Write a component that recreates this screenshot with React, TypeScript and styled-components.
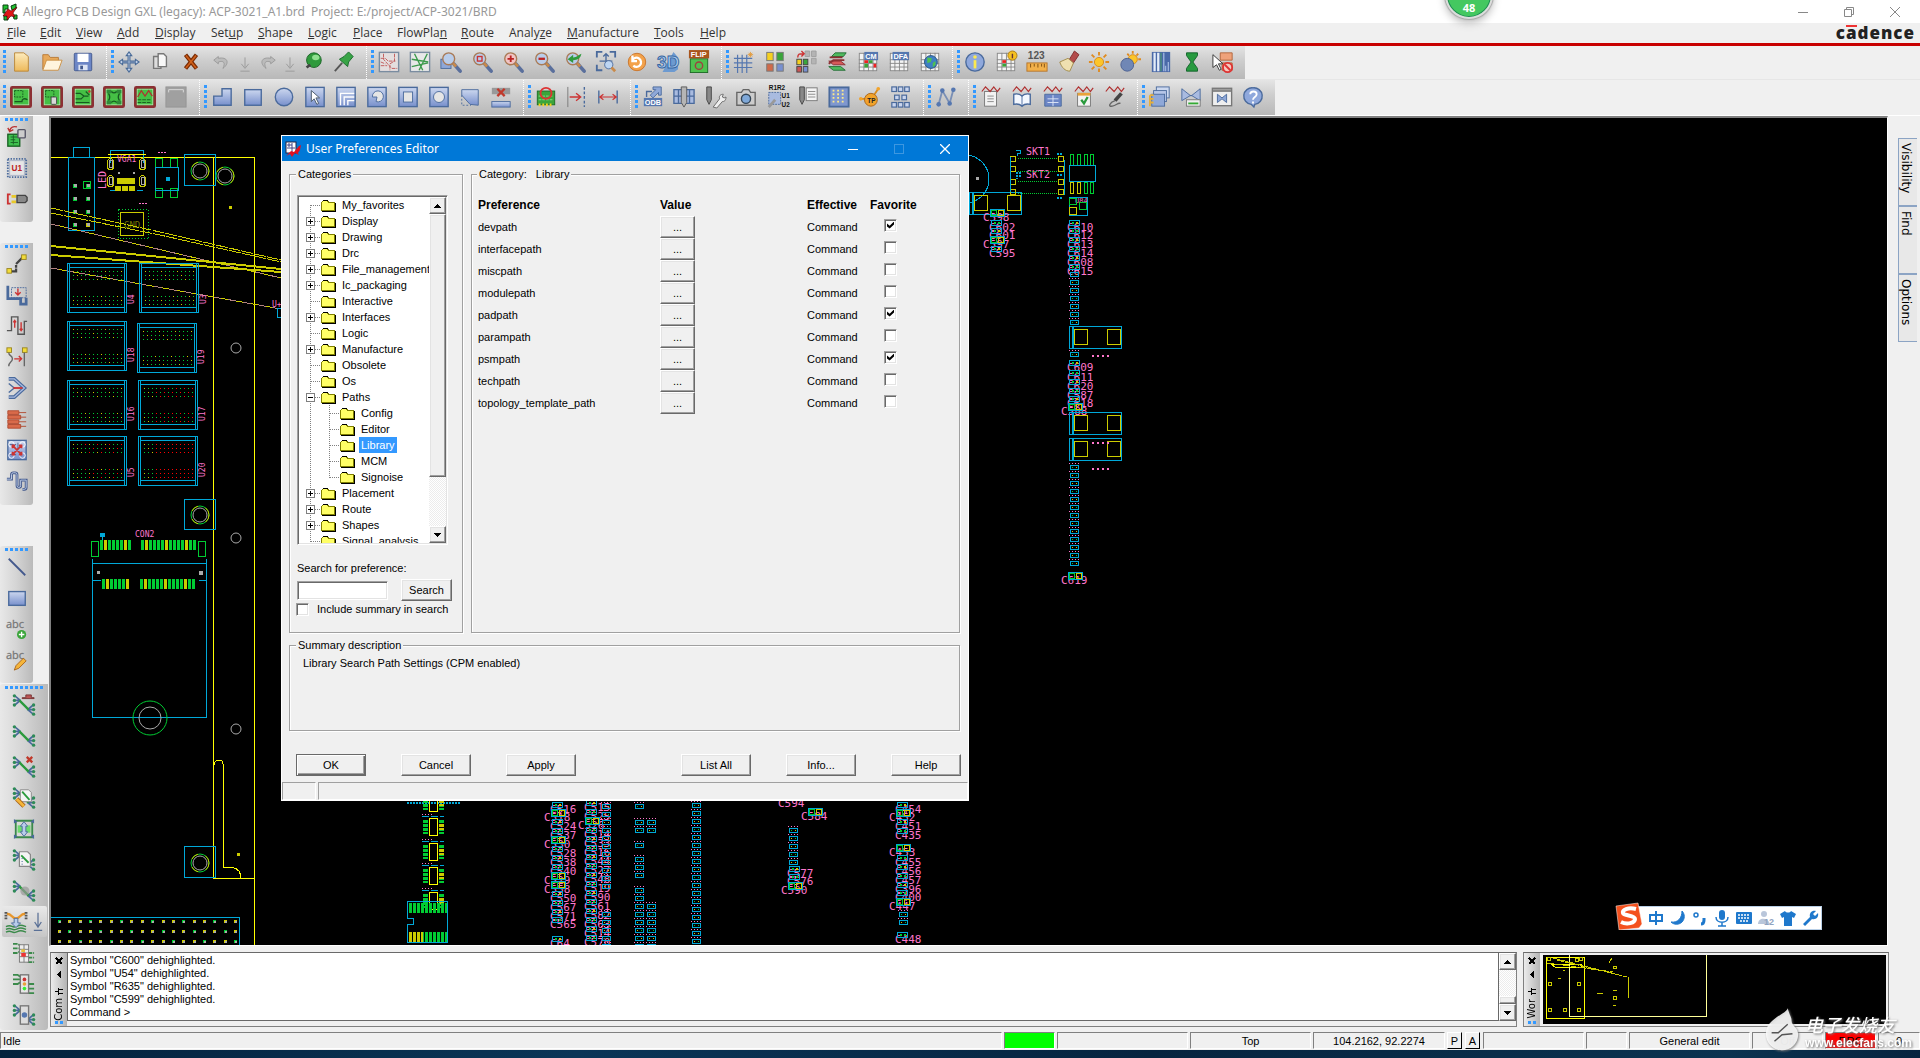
import React, { Fragment, ReactNode } from "react";
import styled, { createGlobalStyle, css } from "styled-components";

const SANS = `"Liberation Sans", Arial, sans-serif`;
const UI = `"Open Sans", "Noto Sans", sans-serif`;
const CAPTION = `"Noto Sans", "Open Sans", sans-serif`;
const FACE = "#f0f0f0";
const CYAN = "#00a8d8";
const GREEN = "#00cc33";
const OLIVE = "#cccc00";
const PINK = "#ff77cc";
const GREY = "#aaaaaa";

const GlobalStyle = createGlobalStyle`
  * { box-sizing: border-box; }
  body { margin: 0; background: ${FACE}; font: 11px/13px ${SANS}; color: #000; }
  button, input { font: inherit; color: inherit; }
`;

/* ---------- shared pieces ---------- */

const raised = css`
  background: ${FACE};
  border: 1px solid;
  border-color: #fff #696969 #696969 #fff;
  box-shadow: inset -1px -1px #a0a0a0, inset 1px 1px #e3e3e3;
`;

const sunken = css`
  border: 1px solid;
  border-color: #a0a0a0 #fff #fff #a0a0a0;
  box-shadow: inset 1px 1px #696969, inset -1px -1px #e3e3e3;
`;

const Page = styled.div`
  display: flex;
  flex-direction: column;
  height: 100vh;
  min-height: 860px;
  position: relative;
  overflow: hidden;
`;

const Defs = styled.svg`
  position: absolute;
  width: 0;
  height: 0;
`;

/* ---------- window chrome ---------- */

const TitleBar = styled.header`
  display: flex;
  align-items: center;
  height: 23px;
  padding: 0 2px;
  background: #fff;
  color: #999;
  font: 12px/20px ${CAPTION};
  white-space: pre;
`;

const WindowTitle = styled.h1`
  flex: 1;
  margin: 0;
  padding-left: 5px;
  font: inherit;
`;

const WindowButton = styled.button`
  display: flex;
  align-items: center;
  justify-content: center;
  width: 46px;
  height: 20px;
  padding: 0;
  border: 0;
  background: none;
`;

const MenuBar = styled.nav`
  display: flex;
  align-items: center;
  height: 23px;
  border-bottom: 3px solid #c80000;
  background: ${FACE};
`;

const MenuItem = styled.button<{ $w: number }>`
  width: ${(p) => p.$w}px;
  padding: 0 0 0 7px;
  border: 0;
  background: none;
  text-align: left;
  color: #333;
  font: 12px/18px ${UI};
  white-space: nowrap;
`;

const Brand = styled.div`
  margin-left: auto;
  padding-right: 5px;
  font: 800 17px/18px "Open Sans", sans-serif;
  letter-spacing: 1px;
  color: #222;
`;

const BrandBar = styled.span`
  border-top: 2px solid #e33;
  display: inline-block;
  line-height: 12px;
`;

const ToolRow = styled.div`
  display: flex;
  height: 34px;
  border-bottom: 1px solid #e6e6e6;
  & + & { height: 36px; border-bottom: 1px solid #fff; }
`;

const ToolGroup = styled.div`
  display: flex;
  align-items: center;
  padding: 0 7px 2px 4px;
  border-left: 1px dotted #fff;
  background: linear-gradient(#e4e4e4, #cfcfcf 40%, #b8b8b8);
  &:first-child { padding-left: 3px; padding-right: 8px; border-left: 0; }
`;

const Grip = styled.i`
  width: 3px;
  height: 24px;
  margin-right: -1px;
  background: repeating-linear-gradient(#3399ff 0 3px, transparent 3px 5px);
`;

const ToolButton = styled.button<{ $w?: number }>`
  display: flex;
  align-items: center;
  justify-content: center;
  width: ${(p) => p.$w ?? 31}px;
  height: 31px;
  padding: 0;
  border: 0;
  background: none;
  svg { display: block; flex: none; overflow: visible; }
`;

const Body = styled.div`
  flex: 1;
  min-height: 0;
  display: grid;
  grid-template-columns: 49px minmax(0, 1fr) 31px;
`;

const SideBars = styled.aside`
  display: flex;
  flex-direction: column;
  align-items: flex-start;
`;

const SideGroup = styled.div<{ $w: number; $gap: number; $pad: number }>`
  display: flex;
  flex-direction: column;
  align-items: center;
  width: ${(p) => p.$w}px;
  margin-bottom: ${(p) => p.$gap}px;
  padding: 2px 0 ${(p) => p.$pad}px;
  border-radius: 3px 0 3px 3px;
  background: linear-gradient(90deg, #e8e8e8, #d4d4d4 50%, #bababa);
`;

const SideGrip = styled.i<{ $w: number }>`
  width: ${(p) => p.$w}px;
  height: 3px;
  background: repeating-linear-gradient(90deg, #3399ff 0 3px, transparent 3px 5px);
`;

const ActiveTool = styled.div`
  display: flex;
  width: 45px;
  border-radius: 2px;
  background: linear-gradient(#e9e9e9, #c6c6c6);
`;

const Centre = styled.main`
  display: flex;
  flex-direction: column;
  min-height: 0;
`;

const Workspace = styled.section`
  position: relative;
  flex: 1;
  min-height: 0;
  display: flex;
  border: 1px solid;
  border-width: 2px 1px 1px 2px;
  border-color: #808080 #fff #fff #808080;
  margin-right: 1px;
`;

const Board = styled.svg`
  flex: 1;
  min-width: 0;
  background: #000;
`;

const TabRail = styled.aside`
  display: flex;
  flex-direction: column;
  padding: 22px 3px 0 9px;
`;

const RailTab = styled.button`
  width: 19px;
  height: 68px;
  padding: 4px 4px 0 0;
  border: 1px solid #8ca4c4;
  border-right: 0;
  background: #e8e8e8;
  writing-mode: vertical-rl;
  text-align: left;
  font: 12px/14px "DejaVu Sans", sans-serif;
`;

/* ---------- docks ---------- */

const Docks = styled.div`
  display: flex;
  gap: 6px;
  padding: 6px 0 5px 1px;
`;

const Dock = styled.section<{ $w?: number }>`
  display: flex;
  height: 75px;
  ${(p) => (p.$w ? `width: ${p.$w}px; flex: none;` : "flex: 1; min-width: 0;")}
  border: 1px solid;
  border-color: #696969 #808080 #808080 #808080;
`;

const DockBar = styled.div`
  display: flex;
  flex-direction: column;
  align-items: center;
  width: 16px;
  padding: 4px 0 2px;
  background: linear-gradient(90deg, #ececec, #b4b4b4);
`;

const DockName = styled.span`
  writing-mode: vertical-rl;
  transform: rotate(180deg);
  margin: -2px 0 auto;
  font: 10px/12px "DejaVu Sans", sans-serif;
`;

const DockGrip = styled.i`
  width: 8px;
  height: 3px;
  background: repeating-linear-gradient(90deg, #3399ff 0 3px, transparent 3px 5px);
`;

const Log = styled.div`
  flex: 1;
  height: 68px;
  padding: 1px 2px;
  background: #fff;
  border: 1px solid #696969;
  border-width: 0 1px 1px 1px;
`;

const LogLine = styled.p`
  margin: 0;
  font: 11px/13px ${SANS};
`;

const WorldView = styled.svg`
  flex: 1;
  margin: 2px 2px 2px 3px;
  background: #000;
`;

const ScrollTrack = styled.div<{ $w: number }>`
  display: flex;
  flex-direction: column;
  width: ${(p) => p.$w}px;
  background: repeating-conic-gradient(#fff 0 25%, #ececec 0 50%) 0 0 / 2px 2px;
`;

const LogScroll = styled(ScrollTrack)`
  height: 68px;
`;

const ScrollButton = styled.button`
  ${raised}
  display: flex;
  align-items: center;
  justify-content: center;
  width: 100%;
  height: 17px;
  padding: 0;
`;

const ScrollThumb = styled.div<{ $h: number }>`
  ${raised}
  height: ${(p) => p.$h}px;
`;

const Spacer = styled.div`
  flex: 1;
`;

/* ---------- status bar ---------- */

const StatusBar = styled.footer`
  display: flex;
  gap: 2px;
  height: 18px;
  padding-bottom: 1px;
  background: ${FACE};
`;

const StatusCell = styled.div<{ $w?: number; $bg?: string }>`
  ${(p) => (p.$w ? `width: ${p.$w}px;` : "flex: 1;")}
  padding-left: ${(p) => (p.$w ? 0 : 2)}px;
  text-align: ${(p) => (p.$w ? "center" : "left")};
  border: 1px solid;
  border-color: #808080 #fff #fff #808080;
  background: ${(p) => p.$bg ?? FACE};
  line-height: 16px;
`;

const StatusButton = styled.button`
  width: 15px;
  height: 17px;
  padding: 0;
  margin: 0 1px 0 0;
  border: 1px solid #000;
  border-color: #fff #000 #000 #fff;
  background: ${FACE};
  line-height: 14px;
`;

const TaskStrip = styled.div`
  display: flex;
  height: 8px;
  background: linear-gradient(90deg, #04223c, #0a3557 30%, #06243f 60%, #0b3350 90%, #06243f);
`;

/* ---------- dialog ---------- */

const Dialog = styled.section`
  position: absolute;
  left: 230px;
  top: 17px;
  width: 688px;
  border: 1px solid #fff;
  background: ${FACE};
`;

const DialogTitle = styled.header`
  display: flex;
  align-items: center;
  height: 25px;
  padding-left: 3px;
  background: #0078d7;
  color: #fff;
  font: 12px/20px ${CAPTION};
`;

const DialogHeading = styled.h2`
  flex: 1;
  margin: 0;
  padding-left: 5px;
  font: inherit;
`;

const DialogBody = styled.div`
  padding: 7px 8px 0 7px;
`;

const Columns = styled.div`
  display: flex;
  gap: 8px;
`;

const Group = styled.fieldset<{ $w?: number }>`
  ${(p) => (p.$w ? `width: ${p.$w}px; flex: none;` : "flex: 1;")}
  min-width: 0;
  margin: 0;
  padding: 14px 7px 16px;
  border: 1px solid #a0a0a0;
  box-shadow: 1px 1px #fff, inset 1px 1px #fff;
`;

const PrefGroup = styled(Group)`
  padding: 13px 6px 16px;
`;

const Legend = styled.legend`
  margin-left: -1px;
  padding: 0 2px;
  background: ${FACE};
  white-space: pre;
`;

const TreeBox = styled.div`
  ${sunken}
  display: flex;
  width: 151px;
  height: 350px;
  padding: 1px;
  background: #fff;
`;

const TreeList = styled.ul`
  flex: 1;
  min-width: 0;
  margin: 0;
  padding: 0;
  overflow: hidden;
  list-style: none;
`;

const TreeRow = styled.li`
  display: flex;
  align-items: center;
  height: 16px;
  white-space: nowrap;
  svg { flex: none; display: block; }
`;

const TreeName = styled.span<{ $on?: boolean }>`
  margin-left: 4px;
  padding: 0 2px;
  line-height: 16px;
  background: ${(p) => (p.$on ? "#3399ff" : "transparent")};
  color: ${(p) => (p.$on ? "#fff" : "#000")};
`;

const SearchLabel = styled.label`
  display: block;
  margin: 17px 0 4px;
`;

const SearchLine = styled.div`
  display: flex;
  align-items: center;
  justify-content: space-between;
  width: 155px;
`;

const SearchBox = styled.input`
  ${sunken}
  width: 91px;
  height: 19px;
  padding: 2px;
  background: #fff;
  outline: 0;
`;

const CheckLine = styled.label`
  display: flex;
  align-items: center;
  gap: 8px;
  margin: 2px 0 0 -1px;
  white-space: nowrap;
`;

const Check = styled.input`
  ${sunken}
  appearance: none;
  display: block;
  width: 13px;
  height: 13px;
  margin: 0;
  background: #fff;
  &:checked::before {
    content: "";
    display: block;
    width: 7px;
    height: 7px;
    margin: 2px;
    background: #000;
    clip-path: polygon(0 28%, 38% 62%, 100% 0, 100% 43%, 38% 100%, 0 72%);
  }
`;

const PushButton = styled.button<{ $w: number; $default?: boolean }>`
  ${raised}
  width: ${(p) => p.$w}px;
  height: 22px;
  padding: 0;
  ${(p) =>
    p.$default &&
    `border-color: #696969; box-shadow: inset 1px 1px #fff, inset -1px -1px #696969, inset -2px -2px #a0a0a0;`}
`;

const PrefTable = styled.table`
  width: 100%;
  border-collapse: collapse;
  table-layout: fixed;
  th, td { height: 22px; padding: 0; text-align: left; font-weight: 400; }
  thead th { font-weight: 700; font-size: 12px; }
  td:last-child { padding: 0 0 4px 14px; }
`;

const Summary = styled(Group)`
  height: 92px;
  margin-top: 6px;
  padding-top: 5px;
  padding-left: 13px;
  legend { margin-left: -7px; }
`;

const SummaryText = styled.p`
  margin: 0;
`;

const Actions = styled.div`
  display: flex;
  gap: 35px;
  padding: 23px 0 6px 7px;
  margin-right: -1px;
`;

const PushGap = styled.div`
  flex: 1;
`;

const DialogStatus = styled.div`
  display: flex;
  gap: 2px;
  height: 18px;
`;

const DialogStatusCell = styled.div<{ $w?: number }>`
  ${(p) => (p.$w ? `width: ${p.$w}px;` : "flex: 1;")}
  border: 1px solid;
  border-color: #a0a0a0 #fff #fff #a0a0a0;
`;

/* ---------- floating overlays ---------- */

const ImeBar = styled.div`
  position: absolute;
  right: 65px;
  bottom: 15px;
  display: flex;
  align-items: center;
  height: 24px;
  width: 203px;
  padding-left: 25px;
  border: 1px solid #b9cfe6;
  background: #fff;
`;

const ImeKey = styled.button`
  display: flex;
  align-items: center;
  justify-content: center;
  width: 22px;
  height: 22px;
  padding: 0;
  border: 0;
  background: none;
  color: #1e78cc;
`;

const ImeLogo = styled.svg`
  position: absolute;
  left: -6px;
  top: -5px;
`;

const CountBadge = styled.div`
  position: absolute;
  left: 1445px;
  top: -29px;
  display: flex;
  align-items: flex-end;
  justify-content: center;
  width: 48px;
  height: 48px;
  padding-bottom: 2px;
  border: 2px solid #dcdcdc;
  border-radius: 50%;
  background: #44c860;
  box-shadow: inset 0 0 0 1px #1f8a55, 0 0 1px 1px #a8a8a8, 0 4px 8px #bbb;
  color: #fff;
  font: 700 11px/14px "Open Sans", sans-serif;
`;

const Watermark = styled.div`
  position: absolute;
  right: 8px;
  bottom: 6px;
  display: flex;
  align-items: flex-end;
  gap: 4px;
  color: #fff;
  filter: drop-shadow(1px 1px 1px #777);
`;

const WatermarkText = styled.div`
  display: flex;
  flex-direction: column;
  font: italic 500 18px/20px "Noto Sans CJK SC", sans-serif;
`;

const WatermarkUrl = styled.span`
  font: 700 12px/18px "Liberation Sans", sans-serif;
`;

/* ---------- icons ---------- */

const ST = "#4a6a9c";
const Ico = ({ children, s = 24 }: { children: ReactNode; s?: number }) => (
  <svg width={s} height={s} viewBox="0 0 24 24" fill="none" aria-hidden="true">
    {children}
  </svg>
);

const Lens = ({ children, c = "#b9cdea" }: { children?: ReactNode; c?: string }) => (
  <>
    <path d="M15 14l7 8" stroke="#5a6f9c" strokeWidth="4" strokeLinecap="round" />
    <path d="M13.500 12.500l4 4.500" stroke="#c98a4a" strokeWidth="3" />
    <circle cx="9.500" cy="8.500" r="6.500" fill={c} stroke="#a97a55" strokeWidth="1.500" />
    {children}
  </>
);

const PcbTile = ({ children }: { children?: ReactNode }) => (
  <>
    <rect x="1.500" y="1.500" width="21" height="21" rx="1" fill="#45c045" stroke="#8c2f33" strokeWidth="3" />
    <rect x="3.500" y="3.500" width="17" height="17" stroke="#bfe8bf" strokeWidth=".7" />
    {children}
  </>
);

const BlueTile = ({ children }: { children?: ReactNode }) => (
  <>
    <rect x="2" y="1.500" width="20" height="21" fill="url(#gBlue)" stroke={ST} strokeWidth="1.500" />
    {children}
  </>
);

const Wave = () => <path d="M2 6l4-5 5 5 4-5 4 5 3-4" stroke="#b03030" strokeWidth="1.300" />;

const Sheet = ({ x = 5, y = 6, w = 13, h = 16 }) => (
  <rect x={x} y={y} width={w} height={h} fill="#f3f3f3" stroke="#777" />
);

const Grid = ({ c = "#888" }) => (
  <>
    <rect x="2.500" y="2.500" width="19" height="19" fill="#f4f4f4" stroke={c} />
    <path d="M2 9.500h20M2 13.500h20M2 17.500h20M7.500 2v20M12.500 2v20M17.500 2v20" stroke={c} />
  </>
);

const ratsEnds = (
  <>
    <path d="M2 2l6 5M2 7h6M2 12l6-5M22 12l-6 5M22 17h-6M22 22l-6-5" stroke={ST} strokeWidth="1.800" />
    {[2, 7, 12].map((y) => (
      <circle key={y} cx="1.500" cy={y} r="1.800" fill="#2e8b57" />
    ))}
    {[12, 17, 22].map((y) => (
      <circle key={y} cx="22.500" cy={y} r="1.800" fill="#2e8b57" />
    ))}
  </>
);
const Rats = ({ children }: { children?: ReactNode }) => (
  <>
    {ratsEnds}
    <path d="M7 7l10 10" stroke="#2a9a3c" strokeWidth="2.500" />
    {children}
  </>
);

const redX = (x: number, y: number, s = 3) => (
  <path d={`M${x - s} ${y - s}l${2 * s} ${2 * s}M${x + s} ${y - s}l${-2 * s} ${2 * s}`} stroke="#c0392b" strokeWidth="2.500" />
);

const icons: Record<string, ReactNode> = {
  "New": <path d="M5 2h10l5 4v16H5z" fill="url(#gGold)" stroke="#b98536" />,
  "Open": <><path d="M2 20V4h6l2 3h9v4" fill="#e8a95a" stroke="#b97a36" /><path d="M6 10h17l-4 11H2z" fill="#fff4dd" stroke="#c98f45" /></>,
  "Save": <><rect x="2.500" y="2.500" width="19" height="19" rx="1" fill="#6c86c6" stroke="#42588c" /><rect x="6" y="3" width="12" height="9" fill="#fff" /><rect x="7" y="15" width="10" height="6" fill="#dde4f3" /><rect x="9" y="16" width="3" height="4" fill="#42588c" /></>,
  "Move": <path d="M12 1l3 4h-2v6h6V9l4 3-4 3v-2h-6v6h2l-3 4-3-4h2v-6H5v2l-4-3 4-3v2h6V5H9z" fill="#c5d3ea" stroke="#486a97" strokeWidth="1.200" />,
  "Copy": <><path d="M5 6h8v13H5z" fill="#ddd" stroke="#777" strokeWidth="1.500" /><path d="M10 3h6l3 3v11h-9z" fill="#f7f7f7" stroke="#777" strokeWidth="1.500" /></>,
  "Delete": <><path d="M6 4l12 15M18 4L6 19" stroke="#7a2c05" strokeWidth="4.500" /><path d="M6.500 5l11 13.500M17.500 5l-11 13.500" stroke="#d0601a" strokeWidth="1.800" /></>,
  "Undo": <path d="M8 6l-5 4 5 4v-2c6-2 8 1 5 7 8-6 5-13-5-11z" fill="#bbb" stroke="#999" />,
  "Undo list": <path d="M8 7v11M4 14l4 5 4-5M3 22h10" stroke="#999" />,
  "Redo": <path d="M16 6l5 4-5 4v-2c-6-2-8 1-5 7-8-6-5-13 5-11z" fill="#bbb" stroke="#999" />,
  "Fix": <><ellipse cx="13" cy="10" rx="8" ry="8" fill="#2f9a3c" stroke="#196325" /><ellipse cx="15" cy="7" rx="4" ry="3" fill="#8fe08f" /><path d="M5 18l4-3" stroke="#444" strokeWidth="3" /></>,
  "Unfix": <><path d="M2 22l8-9" stroke="#555" strokeWidth="2" /><path d="M7 9l9 8 1-5 5-6-5-5-5 5z" fill="#38a446" stroke="#17672a" /></>,
  "Unrats": <><rect x="1.500" y="1.500" width="21" height="21" fill="#e4dede" stroke="#7a8ca0" strokeWidth="1.500" /><path d="M3 8h5l3 3h8M6 3v6l8 9M18 3v8l-5 3v7M3 16h7M15 19h6M3 12l5 2" stroke="#c05858" strokeDasharray="4 1" /></>,
  "Rats": <><rect x="1.500" y="1.500" width="21" height="21" fill="#e8e8e8" stroke="#7a8ca0" strokeWidth="1.500" /><path d="M3 9l18 3M6 3l9 18M20 3l-9 18M3 17l18-4" stroke="#3c9a4c" strokeWidth="1.500" /></>,
  "Zoom points": <><rect x="1" y="9" width="11" height="10" fill="#8fa8d8" stroke={ST} /><Lens /></>,
  "Zoom window": <Lens><rect x="7" y="6" width="5" height="5" stroke="#c33" strokeWidth="1.500" /></Lens>,
  "Zoom in": <Lens c="#f1c4c4"><path d="M6 8.500h7M9.500 5v7" stroke="#b22" strokeWidth="2" /></Lens>,
  "Zoom out": <Lens><path d="M6 8.500h7" stroke="#b22" strokeWidth="2.500" /></Lens>,
  "Zoom previous": <Lens><path d="M4 9l6-5v3c4 0 6-3 9-4-1 5-4 7-9 7v3z" fill="#2f9a3c" /></Lens>,
  "Zoom fit": <><path d="M2 7V1h6M16 1h6v6M2 15v6h6" stroke={ST} strokeWidth="2" /><path d="M12 4v14M5 11h14M9 6l3-3 3 3" stroke={ST} strokeWidth="1.500" /><circle cx="15" cy="15" r="4.500" fill="#bdd5f2" stroke={ST} /><path d="M18 18l4 4" stroke="#c98a4a" strokeWidth="3" /></>,
  "Refresh": <><circle cx="12" cy="12" r="9.500" fill="#f3a24a" stroke="#c8732a" /><path d="M7 10a5 5 0 1 1 1 6M7 5v6h5" stroke="#fff" strokeWidth="2.500" /></>,
  "3D view": <><path d="M18 1l5 6v13l-4 3H6z" fill="#6d9ad0" /><text x="0" y="19" fontFamily="Liberation Sans" fontWeight="700" fontSize="19" fill="#a9c9ee" stroke="#33649f" strokeWidth="1">3D</text></>,
  "Flip": <><rect x="2.500" y="8.500" width="19" height="15" fill="#4fc24f" stroke="#1d6a26" /><circle cx="12" cy="16" r="4" stroke="#a04040" strokeWidth="1.500" /><rect x="1" y="-1" width="22" height="9" fill="#a8541c" /><text x="3" y="6.500" fontFamily="Liberation Sans" fontWeight="700" fontSize="8" fill="#fff">FLIP</text></>,
  "Grid": <><path d="M1 8h20M1 13h20M1 18h20M5 4v20M10 4v20M15 4v20" stroke="#5577b0" strokeWidth="1.300" /><path d="M19 1v6M16 4h6M17 2l4 4M21 2l-4 4" stroke="#e39a3a" /></>,
  "Quick place": <><rect x="3" y="1.500" width="7" height="9" fill="#f5d020" stroke="#777" /><rect x="14" y="1.500" width="7" height="9" fill="#3aa53a" stroke="#777" /><rect x="3" y="14" width="7" height="8" fill="#d06a4a" stroke="#777" /><rect x="14" y="14" width="7" height="8" fill="#7890d0" stroke="#777" /></>,
  "Swap": <><path d="M11 0h5v6h-5zM18 0h5v6h-5zM18 8h5v6h-5z" fill="#b4b4b4" stroke="#a0a0a0" /><rect x="2" y="9" width="5" height="6" fill="#f5d020" stroke="#444" /><rect x="9" y="9" width="5" height="6" fill="#3aa53a" stroke="#444" /><rect x="2" y="17" width="5" height="6" fill="#c55" stroke="#444" /><rect x="9" y="17" width="5" height="6" fill="#7890d0" stroke="#444" /><path d="M3 7c0-4 2-4 6-4M7 0l3 3-3 3" stroke="#c33" strokeWidth="1.500" /></>,
  "Cross section": <><path d="M3 17h13l5 4H8z" fill="#4fb95f" stroke="#246d34" /><path d="M3 11h13l5 4H8z" fill="#d65a5a" stroke="#8c2f33" /><path d="M6 6h13l3-4H10z" fill="#4fb95f" stroke="#246d34" /><path d="M3 14l5-4h12M4 7h14" stroke="#8c2f33" strokeWidth="2" /></>,
  "Constraint manager": <><Grid /><rect x="8" y="1" width="15" height="9" fill="#5577b0" /><text x="9" y="8.500" fontFamily="Liberation Sans" fontWeight="700" fontSize="8" fill="#fff">CM</text><path d="M8 14h4v4H8zM13 10h4v3h-4z" fill="#3aa53a" /><path d="M8 10h4v3H8zM18 14h3v4h-3z" fill="#e22" /></>,
  "DFA": <><Grid /><rect x="5" y="1" width="18" height="9" fill="#5577b0" /><text x="6" y="8.500" fontFamily="Liberation Sans" fontWeight="700" fontSize="8" fill="#fff">DFA</text></>,
  "Constraint web": <><Grid /><circle cx="13" cy="12" r="7" fill="#3f7fc4" stroke="#24507f" /><path d="M9 7l5 1-1 4-4 1zM15 13l3-2v4l-3 3z" fill="#4fc24f" /></>,
  "Info": <><circle cx="12" cy="12" r="10" fill="#8fa8dc" stroke={ST} strokeWidth="1.500" /><path d="M12 10v9" stroke="#fce94f" strokeWidth="3" /><circle cx="12" cy="6.500" r="2" fill="#fce94f" /></>,
  "Element report": <><Grid /><path d="M8 10h4v3H8z" fill="#e22" /><path d="M8 14h4v3H8z" fill="#3aa53a" /><circle cx="19" cy="5" r="5" fill="#f5c020" stroke="#a87a10" /><path d="M19 3v5" stroke="#633" strokeWidth="1.500" /></>,
  "Measure": <><text x="2" y="9" fontFamily="Liberation Sans" fontWeight="700" fontSize="11" fill="#555">123</text><rect x="1" y="13" width="22" height="9" fill="#f2b04a" stroke="#b5742a" /><path d="M5 14v4M9 14v3M13 14v4M17 14v3M20 14v4" stroke="#7a4a10" /></>,
  "Brush": <><path d="M13 10l6-10 5 4-6 9z" fill="#b34a4a" stroke="#7f2f2f" /><path d="M3 12l9-4 6 5-4 9c-5 0-9-4-11-10z" fill="#efe0b0" stroke="#a08a4a" /></>,
  "Highlight": <><circle cx="12" cy="12" r="5" fill="#fcc52a" stroke="#d98b1a" /><path d="M12 1v4M12 19v4M1 12h4M19 12h4M4 4l3 3M17 17l3 3M20 4l-3 3M7 17l-3 3" stroke="#e08a1f" strokeWidth="2" /></>,
  "Dehighlight": <><circle cx="15" cy="9" r="5" fill="#fcc52a" stroke="#d98b1a" /><path d="M15 0v3M24 9h-3M21 3l-2 2M9 3l2 2" stroke="#e08a1f" strokeWidth="2" /><circle cx="9" cy="15" r="7" fill="#7087b5" stroke="#4a5f8f" /></>,
  "Shadow": <><rect x="2" y="1" width="20" height="22" fill="#4a69a8" /><path d="M5 2v20M9 2v20" stroke="#e3ecf8" strokeWidth="2.500" /><path d="M12 2v20" stroke="#4a8f7a" strokeWidth="1.500" /><path d="M15 2v20M17 16v6M20 12v10" stroke="#9db4dc" strokeWidth="1.500" /></>,
  "Waive": <path d="M6 2h12v3l-5 7 5 7v3H6v-3l5-7-5-7z" fill="#279a3f" stroke="#11602a" />,
  "Idle select": <><path d="M9 2h13v8H9z" fill="#efa27a" stroke="#b0643a" /><path d="M11 13h11v8H11z" fill="#efa27a" stroke="#b0643a" /><path d="M1 4v14l4-3 3 6 2-1-3-6h5z" fill="#fff" stroke="#333" /><circle cx="17" cy="18" r="5" fill="#f6c7bd" stroke="#d33" strokeWidth="2" /><path d="M14 15l6 6" stroke="#d33" strokeWidth="2" /></>,

  "Edit mode general": <PcbTile><rect x="5" y="5" width="9" height="7" stroke="#175a20" strokeDasharray="2 1" /><path d="M5 17h8c0-3 3-4 6-2" stroke="#175a20" strokeWidth="1.500" /></PcbTile>,
  "Placement mode": <PcbTile><rect x="5" y="5" width="9" height="7" stroke="#175a20" strokeDasharray="2 1" /><rect x="11" y="12" width="6" height="8" rx="1" fill="#d8d8d8" stroke="#444" /></PcbTile>,
  "Etch mode": <PcbTile><path d="M4 8h5l4 3h5M4 14h6l3-3M4 18h15M15 6l4 4" stroke="#175a20" strokeWidth="1.300" /><circle cx="19" cy="6" r="1.300" fill="#c33" /></PcbTile>,
  "Flow mode": <PcbTile><path d="M6 8c2 3 2 5 0 8M18 8c-2 3-2 5 0 8M9 6c2 2 4 2 6 0M9 18c2-2 4-2 6 0" stroke="#175a20" strokeWidth="1.500" /><path d="M4 4h5v4H4zM15 4h5v4h-5zM4 16h5v4H4zM15 16h5v4h-5z" fill="#2f8b3a" /></PcbTile>,
  "SI mode": <PcbTile><path d="M4 12l4-7 4 6 4-6 4 6" stroke="#b03030" strokeWidth="1.300" /><path d="M4 15h15M4 18h15" stroke="#175a20" strokeDasharray="4 1" /></PcbTile>,
  "Symbol mode": <><rect x="1" y="1" width="22" height="22" fill="#a0a0a0" stroke="#959595" /><path d="M4 7V4h16v3" stroke="#ddd" /></>,

  "Shape polygon": <path d="M3 21V11h9V3h10v18z" fill="url(#gBlue)" stroke={ST} strokeWidth="1.500" />,
  "Shape rectangle": <rect x="3" y="4" width="18" height="17" fill="url(#gBlue)" stroke={ST} strokeWidth="1.500" />,
  "Shape circle": <circle cx="12" cy="12" r="9.500" fill="url(#gBlue)" stroke={ST} strokeWidth="1.500" />,
  "Shape select": <BlueTile><path d="M8 5v12l3-3 3 6 2-1-3-6h4z" fill="#fff" stroke="#456" /></BlueTile>,
  "Shape void element": <BlueTile><path d="M6 21V8h15M10 21v-9h11M14 21v-5h7" stroke="#fff" strokeWidth="1.500" /></BlueTile>,
  "Shape void polygon": <BlueTile><path d="M12 12h-5a6 6 0 1 1 4 5z" fill="#e5e5e5" stroke={ST} /></BlueTile>,
  "Shape void rectangle": <BlueTile><rect x="7" y="6.500" width="10" height="11" fill="#e5e5e5" stroke={ST} /></BlueTile>,
  "Shape void circle": <BlueTile><circle cx="12" cy="12" r="6" fill="#e5e5e5" stroke={ST} /></BlueTile>,
  "Shape edit boundary": <><path d="M3 4h18v17l-9-1-9-10z" fill="url(#gBlue)" stroke={ST} /><path d="M3 10v11h10" stroke={ST} strokeDasharray="2 2" /></>,
  "Delete islands": <><path d="M2 2h20v7H2z" fill="#999" />{redX(12, 7, 4)}<rect x="2" y="17" width="20" height="6" fill="url(#gBlue)" stroke={ST} /></>,
  "Artwork": <><rect x="2.500" y="5.500" width="19" height="15" fill="#3aa53a" stroke="#1d6a26" /><path d="M4 11h16M4 15h16" stroke="#8fdc8f" strokeDasharray="3 1" /><path d="M5 22v-3M9 22v-3M13 22v-3M17 22v-3" stroke="#f5d020" strokeWidth="2" /><circle cx="12" cy="8" r="6" stroke="#d33" strokeWidth="2" /></>,
  "Linear dimension": <><path d="M2 1v22" stroke="#777" /><path d="M20 1v22" stroke={ST} strokeDasharray="3 2" strokeWidth="1.500" /><path d="M4 12h11M11 8l5 4-5 4" stroke="#c33" strokeWidth="1.500" /></>,
  "Datum dimension": <><path d="M2 5v14M22 5v14" stroke={ST} strokeWidth="1.500" /><path d="M4 12h16M7 9l-4 3 4 3M17 9l4 3-4 3" stroke="#c33" strokeWidth="1.300" /></>,

  "ODB++ export": <><rect x="2" y="13" width="20" height="9" fill="#5577b0" /><text x="3" y="20.500" fontFamily="Liberation Sans" fontWeight="700" fontSize="8" fill="#fff">ODB</text><path d="M5 12V6h6" stroke={ST} strokeWidth="1.500" /><path d="M9 10l6-6h-3V1h9v9h-3V7l-6 6z" fill="#8fa8d8" stroke={ST} /></>,
  "Drill table": <><path d="M1 4h22v15H1zM1 11h22M6 4v15M18 4v15" stroke={ST} strokeWidth="1.500" fill="#a9bbe0" /><path d="M9 1h6v17l-3 5-3-5z" fill="#b5b5b5" stroke="#555" /></>,
  "NC parameters": <><path d="M3 1h5v14l-2.500 5L3 15z" fill="#888" stroke="#444" /><path d="M10 23l7-9c-1-3 1-5 4-5l-1 3 2 1 2-1c0 4-2 5-4 5l-6 7z" fill="#eee" stroke="#666" /></>,
  "Snapshot": <><path d="M2 7h5l2-3h6l2 3h5v14H2z" fill="#ccc" stroke="#666" strokeWidth="1.500" /><circle cx="12" cy="14" r="5" fill="#7fa8d8" stroke="#345" strokeWidth="1.500" /></>,
  "Rename refdes": <><text x="3" y="4" fontFamily="Liberation Sans" fontWeight="700" fontSize="7" fill="#111">R1R2</text><rect x="3" y="7" width="13" height="13" fill="#a9bbe0" stroke={ST} strokeDasharray="2 1" /><text x="17" y="13" fontFamily="Liberation Sans" fontWeight="700" fontSize="7" fill="#111">U1</text><text x="17" y="23" fontFamily="Liberation Sans" fontWeight="700" fontSize="7" fill="#111">U2</text><path d="M3 23l7-8" stroke="#999" strokeWidth="3" /></>,
  "Drill legend": <><path d="M3 1h5v14l-2.500 5L3 15z" fill="#888" stroke="#444" /><Sheet x={10} y={2} w={12} h={14} /><path d="M12 6h8M12 9h8M12 12h8" stroke="#888" /></>,
  "Silkscreen": <><rect x="1.500" y="1.500" width="21" height="21" fill="#7f97cf" stroke={ST} strokeWidth="2" /><path d="M5 5h14M5 9h14M5 13h14M5 17h14" stroke="#fce98a" strokeWidth="2" strokeDasharray="2 3" /></>,
  "Testprep": <><path d="M1 14h6M17 9l4-6" stroke="#d98b1a" strokeWidth="2" /><circle cx="2" cy="14" r="2" fill="#f2a32a" /><circle cx="21" cy="3" r="2" fill="#f2a32a" /><circle cx="13" cy="15" r="7" fill="#f2a32a" stroke="#a8641a" /><text x="9" y="18" fontFamily="Liberation Sans" fontWeight="700" fontSize="7" fill="#222">TP</text></>,
  "Auto assembly": <>{[[3, 1], [10, 1], [17, 1], [6, 10], [14, 10], [3, 18], [10, 18], [17, 18]].map(([x, y]) => <rect key={x + "-" + y} x={x - 1} y={y} width="5" height="5" fill="#c9d5ee" stroke={ST} strokeWidth="1.300" />)}</>,
  "Signal probe": <><path d="M4 20l4-15 8 14 4-15" stroke="#7a8fb5" strokeWidth="2" /><circle cx="4" cy="20" r="2.500" fill="#5577b0" /><circle cx="8" cy="5" r="2.500" fill="#5577b0" /><circle cx="16" cy="19" r="2.500" fill="#5577b0" /><circle cx="20" cy="4" r="2.500" fill="#5577b0" /></>,
  "Signal sheet": <><Sheet /><path d="M8 11h7M8 14h7M8 17h7" stroke="#888" /><Wave /></>,
  "Signal library": <><path d="M3 9c4-1 7 0 9 2 2-2 5-3 9-2v11c-4-1-7 0-9 2-2-2-5-3-9-2z" fill="#f4f8ff" stroke={ST} strokeWidth="1.500" /><path d="M12 11v11" stroke={ST} /><Wave /></>,
  "Signal model": <><path d="M3 9h18v13H3z" fill="#6c86c6" stroke={ST} /><path d="M6 14h12M6 18h12M12 10v12" stroke="#dfe7f7" /><Wave /></>,
  "Signal audit": <><Sheet x={5} y={8} w={14} h={14} /><path d="M5 9h14" stroke="#e8a23a" strokeWidth="3" /><path d="M9 15l3 4 4-7" stroke="#2a9a3c" strokeWidth="2.500" /><Wave /></>,
  "Signal probe pen": <><path d="M19 8l-7 8" stroke="#444" strokeWidth="4" /><path d="M12 16c-6 2-8 7-3 6s6-4 9-3" stroke="#666" strokeWidth="1.500" /><Wave /></>,
  "Cascade": <><rect x="8" y="1" width="14" height="12" fill="#cdd9f0" stroke={ST} /><rect x="5" y="5" width="14" height="12" fill="#b6c6e8" stroke={ST} /><rect x="3" y="9" width="14" height="13" fill="#8fa8d8" stroke={ST} /><path d="M1 10v12M1 10h4M1 14h4M1 18h4" stroke="#e8b03a" strokeWidth="2" /></>,
  "Mirror board": <><path d="M2 3l10 8 10-8v13l-10-6-10 6z" fill="#a9bbe0" stroke={ST} /><rect x="7" y="15" width="15" height="7" fill="#eee" stroke="#777" /><path d="M9 19h11" stroke="#3a3" strokeWidth="2" /></>,
  "Mirror window": <><rect x="1.500" y="2.500" width="21" height="19" fill="#eee" stroke="#777" strokeWidth="1.500" /><path d="M2 5h20" stroke="#888" strokeWidth="3" /><path d="M7 9l5 4 5-4v9l-5-4-5 4z" fill="#8fa8d8" stroke={ST} /></>,
  "Help": <><path d="M12 2a9 9 0 1 1 2 18l-1 3-3-3A9 9 0 0 1 12 2z" fill="#8fa8dc" stroke={ST} strokeWidth="1.500" /><path d="M9 9c0-4 7-4 7 0 0 3-4 3-4 6M12 17v2" stroke="#fff" strokeWidth="2" /></>,

  "Place manual": <><rect x="2" y="9" width="13" height="13" fill="#3fc04f" stroke="#196325" strokeWidth="1.500" /><path d="M5 12h8M5 15h5M5 18h8M8 10v10" stroke="#196325" /><rect x="13" y="4" width="8" height="9" rx="1" fill="#ccc" stroke="#556" strokeWidth="1.500" /><path d="M12 1C8 0 5 1 4 5M2 2l2 4 4-2" stroke="#b33" strokeWidth="1.500" /></>,
  "Place component": <><rect x="2" y="2" width="20" height="20" stroke={ST} strokeWidth="2" strokeDasharray="1.500 1.500" /><rect x="4" y="4" width="16" height="16" fill="#e6e6e6" stroke="#a9b4c8" /><text x="6" y="15.500" fontFamily="Liberation Sans" fontWeight="700" fontSize="9" fill="#b22">U1</text></>,
  "Swap pins": <><path d="M5 7H2v10h3" stroke="#c33" strokeWidth="2" /><path d="M6 9h5M6 15h5" stroke="#e8c82a" strokeWidth="3" /><path d="M12 8h9l2 2v4l-2 2h-9z" fill="#888" stroke="#444" strokeWidth="1.500" /></>,
  "Add connect": <><path d="M5 20h6v-8l7-7" stroke="#444" strokeWidth="2.500" strokeDasharray="9 1 3 1" /><rect x="1" y="17" width="5" height="5" fill="#f2dc3a" stroke="#988420" /><rect x="17" y="2" width="5" height="5" fill="#f2dc3a" stroke="#988420" /></>,
  "Slide": <><path d="M2 2v14h14v6h6v-7" stroke={ST} strokeWidth="3" /><path d="M6 4h16v11H6z" stroke={ST} strokeDasharray="2 1" /><path d="M13 5v6M10 9l3 3 3-3" stroke="#c33" strokeWidth="1.500" /></>,
  "Delay tune": <><path d="M1 17h5V2h7v19h7V7h3" stroke="#555" strokeWidth="1.500" /><path d="M9.500 14V6M8 8l1.500-2L11 8M16.500 8v9M15 15l1.500 2 1.500-2" stroke="#c33" strokeWidth="1.500" /></>,
  "Custom smooth": <><rect x="1" y="2" width="5" height="5" fill="#f2dc3a" stroke="#988420" /><rect x="18" y="2" width="5" height="5" fill="#f2dc3a" stroke="#988420" /><path d="M3 7c0 4 4 3 4 7s-4 3-4 8M20 7v15" stroke="#666" strokeWidth="1.500" /><path d="M9 14h8M14 11l3 3-3 3" stroke="#c33" strokeWidth="1.500" /></>,
  "Fanout": <><path d="M3 2h6l11 10L9 22H3" stroke={ST} strokeWidth="4" /><path d="M3 2h6l11 10L9 22H3" stroke="#a9bbe0" strokeWidth="1.500" /><path d="M3 7l6 5-6 5" stroke={ST} strokeWidth="1.500" /><path d="M8 12h10" stroke="#c33" strokeWidth="2" /></>,
  "Spread": <path d="M2 3h12v4H2zM2 8h14v4H2zM2 13h12v4H2zM2 18h14v4H2zM14 5h8M16 10h6M14 15h8M16 20h6" fill="#d96a4a" stroke="#b04a30" />,
  "Auto route": <BlueTile><path d="M4 6h7M13 4v7M4 17h7M16 14v7" stroke={ST} /><circle cx="6" cy="6" r="3" stroke="#fff" /><circle cx="18" cy="6" r="3" stroke="#fff" /><circle cx="6" cy="18" r="3" stroke="#fff" /><circle cx="18" cy="18" r="3" stroke="#fff" /><path d="M7 7l10 10M17 7L7 17M7 10V7h3M14 7h3v3M7 14v3h3M14 17h3v-3" stroke="#c33" strokeWidth="1.800" /></BlueTile>,
  "Snake": <><path d="M1 10h5V5q0-2 2-2h2q2 0 2 2v12q0 2 2 2t2-2v-6h6v8q0 2-2 2h-2" stroke="#42588c" strokeWidth="3" /><path d="M1 10h5V5q0-2 2-2h2q2 0 2 2v12q0 2 2 2t2-2v-6h6v8q0 2-2 2h-2" stroke="#c5d3ea" strokeWidth="1" /></>,
  "Add line": <path d="M3 3l18 18" stroke="#42588c" strokeWidth="2" />,
  "Add rectangle": <rect x="3" y="5" width="18" height="15" fill="url(#gBlue)" stroke={ST} strokeWidth="1.500" />,
  "Add text": <><text x="0" y="11" fontFamily="Open Sans" fontSize="12" fill="#777" stroke="#777" strokeWidth=".3">abc</text><circle cx="17" cy="18" r="5" fill="#3aa53a" /><path d="M14 18h6M17 15v6" stroke="#fff" strokeWidth="1.500" /></>,
  "Edit text": <><text x="0" y="11" fontFamily="Open Sans" fontSize="12" fill="#777" stroke="#777" strokeWidth=".3">abc</text><path d="M9 23l2-5 8-8 3 3-8 8z" fill="#f5b53a" stroke="#a8641a" /></>,

  "Flow hide": <Rats><path d="M10 5h13v-1h-3v-3h-6v3h-4z" fill="#b55" stroke="#733" /></Rats>,
  "Flow show": <Rats />,
  "Flow delete": <Rats>{redX(18, 4)}</Rats>,
  "Flow edit": <Rats><path d="M8 3h9l3 3v10H8z" fill="#f4f4f4" stroke="#888" /><path d="M10 5l8 9" stroke="#2a9a3c" strokeWidth="2" /><path d="M4 13l8 8" stroke="#a8641a" strokeWidth="5" /><path d="M4 13l8 8" stroke="#f5b53a" strokeWidth="3" /></Rats>,
  "Flow width": <><path d="M2 3h20M2 21h20M3 3v18M21 3v18" stroke="#3a8a4a" strokeWidth="2" /><path d="M1 6V1l4 3zM23 6V1l-4 3zM1 18v5l4-3zM23 18v5l-4-3z" fill={ST} /><rect x="5" y="8" width="14" height="8" fill="#6edc6e" /><path d="M12 4l4 5h-2v6h2l-4 5-4-5h2V9H8z" fill="#b9cdea" stroke={ST} /></>,
  "Flow sheet": <Rats><path d="M7 3h9l3 3v13H7z" fill="#f4f4f4" stroke="#888" strokeWidth="1.300" /><path d="M9 7l8 8" stroke="#2a9a3c" strokeWidth="2" /><path d="M10 10v7" stroke={ST} strokeDasharray="1 2" strokeWidth="1.500" /></Rats>,
  "Flow via": <Rats><circle cx="13" cy="12" r="5" fill="#999" fillOpacity=".7" /></Rats>,
  "Flow plan": <><path d="M2 3c6 0 5 5 10 5s4-5 10-5" stroke="#e8962a" strokeWidth="2.500" /><path d="M1 17c7-3 6 2 11 0s5-2 11 0M1 20c7-3 6 2 11 0s5-2 11 0M1 23c7-3 6 2 11 0s5-2 11 0" stroke="#3a8a4a" strokeWidth="1.500" /><path d="M10 8h4v5h3l-5 5-5-5h3z" fill="#b9cdea" stroke={ST} /><path d="M1 1v8M23 1v8" stroke="#555" strokeDasharray="2 1" strokeWidth="3" /></>,
  "Flow plan options": <path d="M8 1v16M4 12l4 6 4-6M3 22h10" stroke="#5a7096" strokeWidth="1.500" />,
  "Flow table": <><path d="M0 2h5l3 2M0 7h8M0 12h5l3-2M16 12h7M16 17h7M16 22h7" stroke="#3a8a4a" strokeWidth="2" strokeDasharray="5 1" /><rect x="7" y="3" width="10" height="19" fill="#eee" stroke="#777" /><path d="M7 8h10M7 12h10M7 16h10M12 3v19" stroke="#777" /><rect x="9" y="12" width="5" height="4" fill="#e33" /><rect x="9" y="8" width="4" height="3" fill="#e8c23a" /></>,
  "Flow lights": <><path d="M0 2h5l3 2M0 7h8M0 12h5l3-2M16 12h7M16 17h7M16 22h7" stroke="#3a8a4a" strokeWidth="2" /><rect x="8" y="2" width="9" height="20" fill="#e6e6e6" stroke="#777" strokeWidth="1.500" /><circle cx="12.500" cy="7" r="2" fill="#c33" /><circle cx="12.500" cy="12" r="2" fill="#e8a23a" /><circle cx="12.500" cy="17" r="2" fill="#3e3" /></>,
  "Flow convert": <Rats><rect x="8" y="2" width="9" height="20" fill="#ddd" stroke="#777" strokeWidth="1.500" /><circle cx="12.500" cy="12" r="3" fill="#5577b0" /></Rats>,
};

const toolRows: [string, number?][][][] = [
  [
    [["New"], ["Open"], ["Save"]],
    [["Move"], ["Copy"], ["Delete"], ["Undo"], ["Undo list", 15], ["Redo", 30], ["Undo list", 15], ["Fix"], ["Unfix"]],
    [["Unrats"], ["Rats"], ["Zoom points"], ["Zoom window"], ["Zoom in"], ["Zoom out"], ["Zoom previous"], ["Zoom fit"], ["Refresh"], ["3D view"], ["Flip"]],
    [["Grid"], ["Quick place"], ["Swap"], ["Cross section"], ["Constraint manager"], ["DFA"], ["Constraint web"]],
    [["Info"], ["Element report"], ["Measure"], ["Brush"], ["Highlight"], ["Dehighlight"], ["Shadow"], ["Waive"], ["Idle select"]],
  ],
  [
    [["Edit mode general"], ["Placement mode"], ["Etch mode"], ["Flow mode"], ["SI mode"], ["Symbol mode"]],
    [["Shape polygon"], ["Shape rectangle"], ["Shape circle"], ["Shape select"], ["Shape void element"], ["Shape void polygon"], ["Shape void rectangle"], ["Shape void circle"], ["Shape edit boundary"], ["Delete islands"]],
    [["Artwork"], ["Linear dimension"], ["Datum dimension"]],
    [["ODB++ export"], ["Drill table"], ["NC parameters"], ["Snapshot"], ["Rename refdes"], ["Drill legend"], ["Silkscreen"], ["Testprep"], ["Auto assembly"]],
    [["Signal probe"]],
    [["Signal sheet"], ["Signal library"], ["Signal model"], ["Signal audit"], ["Signal probe pen"]],
    [["Cascade"], ["Mirror board"], ["Mirror window"], ["Help"]],
  ],
];

const sideGroups = [
  { w: 33, gap: 21, pad: 8, names: ["Place manual", "Place component", "Swap pins"] },
  { w: 33, gap: 41, pad: 9, names: ["Add connect", "Slide", "Delay tune", "Custom smooth", "Fanout", "Spread", "Auto route", "Snake"] },
  { w: 33, gap: 1, pad: 8, names: ["Add line", "Add rectangle", "Add text", "Edit text"] },
  { w: 48, gap: 0, pad: 0, names: ["Flow hide", "Flow show", "Flow delete", "Flow edit", "Flow width", "Flow sheet", "Flow via", "Flow plan", "Flow table", "Flow lights", "Flow convert"] },
];

const Tool = ({ name, w, s = 24 }: { name: string; w?: number; s?: number }) => (
  <ToolButton $w={w} aria-label={name}>
    <Ico s={s}>{w === 15 ? <g transform="translate(4 0)">{icons[name]}</g> : icons[name]}</Ico>
  </ToolButton>
);

/* ---------- board drawing ---------- */

const Label = ({ x, y, t, r, s = 10 }: { x: number; y: number; t: string; r?: number; s?: number }) => (
  <text x={x} y={y} fill={PINK} fontFamily="DejaVu Sans Mono" fontSize={s} transform={r ? `rotate(${r} ${x} ${y})` : undefined}>
    {t}
  </text>
);

const Box = ({ x, y, w, h, c }: { x: number; y: number; w: number; h: number; c: string }) => (
  <rect x={x + 0.5} y={y + 0.5} width={w} height={h} stroke={c} />
);

const Dot = ({ x, y, c, s = 3 }: { x: number; y: number; c: string; s?: number }) => (
  <rect x={x} y={y} width={s} height={s} fill={c} />
);

/* a column of small two-pad parts */
const Strip = ({ x, from, to, step = 8 }: { x: number; from: number; to: number; step?: number }) => {
  const out: ReactNode[] = [];
  for (let y = from, i = 0; y <= to; y += step, i++) {
    out.push(
      <g key={y}>
        <rect x={x + 0.5} y={y + 0.5} width="8" height="4" stroke={CYAN} />
        <path d={`M${x - 1} ${y - 1.5}h11`} stroke={PINK} strokeDasharray="1 2" />
        <Dot x={x + 2} y={y + 2} s={1} c={i % 3 ? OLIVE : GREEN} />
        <Dot x={x + 6} y={y + 2} s={1} c={i % 2 ? GREEN : OLIVE} />
      </g>
    );
  }
  return <>{out}</>;
};

/* named capacitors: [y, text, wide body] */
type Cap = [number, string, boolean?];
const Caps = ({ x, list }: { x: number; list: Cap[] }) => (
  <>
    {list.map(([y, t, wide], i) => (
      <g key={i}>
        <Label x={wide ? x - 8 : x - 2} y={y + 10} t={t} s={11} />
        {wide ? (
          <>
            <Box x={x - 1} y={y - 2} w={14} h={7} c={CYAN} />
            <Box x={x} y={y - 1} w={5} h={5} c={GREEN} />
            <Box x={x + 7} y={y - 1} w={5} h={5} c={OLIVE} />
          </>
        ) : (
          <>
            <Box x={x} y={y - 1} w={10} h={5} c={CYAN} />
            <Dot x={x + 3} y={y + 1} s={2} c={GREEN} />
            <Dot x={x + 7} y={y + 1} s={2} c={i % 2 ? GREEN : OLIVE} />
          </>
        )}
      </g>
    ))}
  </>
);

const memory = [
  { x: 67, y: 263, t: "U4", red: 0 },
  { x: 139, y: 263, t: "U3", red: 0 },
  { x: 67, y: 321, t: "U18", red: 0 },
  { x: 137, y: 323, t: "U19", red: 0 },
  { x: 67, y: 380, t: "U16", red: 0 },
  { x: 138, y: 380, t: "U17", red: 2 },
  { x: 67, y: 436, t: "U5", red: 3 },
  { x: 138, y: 436, t: "U20", red: 1 },
];

const Memory = ({ x, y, t, red }: { x: number; y: number; t: string; red: number }) => (
  <g>
    <Box x={x} y={y} w={59} h={49} c={CYAN} />
    <Box x={x + 2} y={y + 4} w={55} h={40} c={CYAN} />
    <path d={`M${x + 57.5} ${y}v49M${x + 2.5} ${y}v49`} stroke={CYAN} />
    {[8, 12, 16, 33, 37, 41].map((dy, r) =>
      Array.from({ length: 13 }, (_, i) => (
        <Dot
          key={`${dy}-${i}`}
          x={x + 6 + i * 4}
          y={y + dy}
          s={1}
          c={red && (i + r) % red === 0 && i > 2 ? "#f00" : (i * 3 + r) % 4 === 0 ? OLIVE : GREEN}
        />
      ))
    )}
    <Label x={x + 67} y={y + 41} t={t} r={-90} s={8} />
  </g>
);

const Comb = ({ x, y, n }: { x: number; y: number; n: number }) => (
  <>
    {Array.from({ length: n }, (_, i) => (
      <rect key={i} x={x + i * 4} y={y} width="3" height="10" fill={i % 5 === 1 ? OLIVE : GREEN} />
    ))}
  </>
);

const Hole = ({ x, y }: { x: number; y: number }) => (
  <g shapeRendering="auto">
    <circle cx={x} cy={y} r="9" stroke={GREEN} />
    <circle cx={x} cy={y} r="9" stroke={OLIVE} strokeDasharray="8 8" />
    <circle cx={x} cy={y} r="7" stroke={GREY} />
  </g>
);

const BigPart = ({ x, y }: { x: number; y: number }) => (
  <>
    <Box x={x} y={y} w={52} h={22} c={CYAN} />
    <path d={`M${x + 4} ${y}v22`} stroke={CYAN} strokeWidth="2" />
    <Box x={x + 5} y={y + 3} w={13} h={15} c={OLIVE} />
    <Box x={x + 38} y={y + 3} w={13} h={15} c={OLIVE} />
  </>
);

const GateIc = ({ y }: { y: number }) => (
  <>
    <Box x={429} y={y} w={8} h={17} c="#ffff00" />
    <path d={`M425 ${y + 2}v14M441 ${y + 2}v14`} stroke={GREEN} strokeWidth="5" strokeDasharray="3 1" />
    <path d={`M441 ${y + 6}v6`} stroke={OLIVE} strokeWidth="5" strokeDasharray="3 1" />
    <path d={`M422 ${y - 2}.5h22`} stroke={CYAN} strokeDasharray="7 2" />
    <path d={`M422 ${y - 4}.5h10`} stroke={PINK} strokeDasharray="1 2" />
  </>
);

const ySlots = [921, 931, 941];
const xSlots = Array.from({ length: 18 }, (_, i) => 58 + Math.round(i * 10.35));

const BoardDrawing = () => (
  <Board fill="none" shapeRendering="crispEdges" aria-label="Board layout">
    <g transform="translate(-51 -118)">
      <path d="M51 157.500H254.500V948M213.500 157V878.500H254" stroke="#ffff00" />
      <path d="M214 765q1-5 5-5t4 4V867.500h10q8 2 8 11" stroke="#ffff00" />

      <Box x={73} y={147} w={16} h={10} c={CYAN} />
      <Box x={68} y={157} w={26} h={73} c={CYAN} />
      {[184, 197, 210, 223].map((y, i) => (
        <Fragment key={y}>
          <Dot x={73} y={y} c={GREEN} s={4} />
          <Dot x={74} y={y} c={GREY} />
          <Dot x={86} y={y} c={i === 3 ? OLIVE : GREEN} s={4} />
          <Dot x={87} y={y} c={GREY} />
        </Fragment>
      ))}
      <Box x={83} y={181} w={7} h={7} c={GREEN} />

      <path d="M110 163v-12.500h33v12.500M110 190.500h6M137 190.500h6" stroke={CYAN} />
      <path d="M108 154.500h38" stroke="#ffff00" />
      {[107, 139].map((x) =>
        [158, 175].map((y) => (
          <g key={x + "." + y}>
            <rect x={x + 0.5} y={y + 0.5} width="6" height="11" rx="3" stroke={OLIVE} />
            <rect x={x + 2.500} y={y + 2.500} width="3" height="7" rx="1" stroke={GREY} />
          </g>
        ))
      )}
      <Label x={117} y={162} t="VGA1" s={8} />
      <path d="M117 181h18" stroke={OLIVE} strokeWidth="6" />
      <path d="M115 188h21" stroke={OLIVE} strokeWidth="5" strokeDasharray="6 1" />
      <Dot x={118} y={172} c={GREY} s={2} />
      <Dot x={133} y={172} c={GREY} s={2} />
      <Label x={106} y={189} t="LED" r={-90} />

      {[155, 170].map((x) => (
        <Fragment key={x}>
          <Box x={x} y={158} w={7} h={9} c={GREEN} />
          <Box x={x} y={188} w={7} h={9} c={GREEN} />
        </Fragment>
      ))}
      <Box x={155} y={167} w={23} h={23} c={CYAN} />
      <Dot x={166} y={177} c={CYAN} s={4} />
      <path d="M158 152.500h8M139 203.500h8" stroke={PINK} strokeDasharray="2 1" />

      <Box x={184} y={154} w={31} h={31} c={CYAN} />
      <Box x={184} y={499} w={31} h={30} c={CYAN} />
      <Box x={184} y={846} w={31} h={31} c={CYAN} />
      <Hole x={200} y={171} />
      <Hole x={225} y={176} />
      <Hole x={200} y={515} />
      <Hole x={200} y={863} />
      <Dot x={229} y={206} c={OLIVE} />
      <Dot x={237} y={853} c={OLIVE} />
      {[348, 538, 729].map((y) => (
        <circle key={y} cx="236" cy={y} r="5" stroke={GREY} shapeRendering="auto" />
      ))}

      <Box x={120} y={212} w={23} h={23} c={OLIVE} />
      <rect x="118.500" y="209.500" width="30" height="29" stroke={GREEN} strokeDasharray="1 2" />
      <text x="124" y="228" fill="#777700" fontFamily="DejaVu Sans Mono" fontSize="9">GND</text>

      <path d="M51 208L160 232 281 260M51 213L160 235 281 262" stroke={OLIVE} strokeDasharray="12 1" />
      <path d="M51 224L281 278M51 268L281 309" stroke={OLIVE} />
      <path d="M51 224L281 278M51 268L281 309" stroke="#b08080" strokeDasharray="8 7" />
      <path d="M51 246L281 269M51 255L281 272" stroke={OLIVE} strokeWidth="2" />

      {memory.map((m) => (
        <Memory key={m.t} {...m} />
      ))}
      <Label x={272} y={307} t="U+" s={8} />
      <path d="M281 308h-4v9h4" stroke={CYAN} />

      <Label x={135} y={537} t="CON2" s={8} />
      <path d="M100 533h5v4h-2v4h-1v-4h-2z" fill={CYAN} />
      <Box x={91} y={541} w={7} h={15} c={GREEN} />
      <Box x={198} y={541} w={7} h={15} c={GREEN} />
      <Comb x={100} y={540} n={8} />
      <Comb x={141} y={540} n={14} />
      <Comb x={102} y={579} n={7} />
      <Comb x={140} y={579} n={14} />
      <path d="M92.500 559V717.500H206.500V559M92 563.500h114M92 580.500h9M199 580.500h7" stroke={CYAN} />
      <Dot x={97} y={571} c={GREY} />
      <Dot x={199} y={571} c={GREY} s={4} />
      <circle cx="150" cy="718" r="17" stroke={GREEN} shapeRendering="auto" />
      <circle cx="150" cy="718" r="11" stroke={GREY} shapeRendering="auto" />

      <path d="M51 917.500H239.500V948" stroke={CYAN} />
      {ySlots.map((y, r) =>
        xSlots.map((x, i) => (
          <Fragment key={`${y}-${x}`}>
            <Dot x={x} y={y - 1} c={(i * 2 + r) % 3 ? OLIVE : GREEN} />
            <Dot x={x + 1} y={y} c={GREY} s={2} />
          </Fragment>
        ))
      )}

      <circle cx="965" cy="179" r="24" stroke={CYAN} />
      <Dot x={976} y={177} c={GREY} />
      <BigPart x={969} y={192} />
      <Label x={1026} y={155} t="SKT1" />
      <Label x={1026} y={178} t="SKT2" />
      {[156, 166, 179, 189].map((y) => (
        <Fragment key={y}>
          <Box x={1010} y={y} w={5} h={5} c={OLIVE} />
          <Box x={1058} y={y} w={5} h={5} c={OLIVE} />
        </Fragment>
      ))}
      <path d="M1018 158.500h40M1018 171.500h40M1018 181.500h40M1018 193.500h40" stroke={GREEN} strokeDasharray="1 1" />
      <path d="M1010.500 157v35M1064.500 160v35M1016 150h4v3h-3v3" stroke={CYAN} />
      <path d="M1016 173h4v3h-3v3M1057 154h6M1057 175h6M1057 198h6" stroke={CYAN} strokeWidth="2" strokeDasharray="2 1" />
      {[1070, 1077, 1084, 1090].map((x, i) => (
        <Fragment key={x}>
          <Box x={x} y={154} w={3} h={11} c={GREEN} />
          <Box x={x} y={182} w={3} h={11} c={i < 2 ? OLIVE : GREEN} />
        </Fragment>
      ))}
      <Box x={1069} y={165} w={26} h={16} c={CYAN} />
      <Label x={1075} y={203} t="U84" s={7} />
      <Box x={1069} y={197} w={18} h={18} c={CYAN} />
      <Box x={1069} y={198} w={7} h={6} c={GREEN} />
      <Box x={1079} y={202} w={7} h={7} c={GREEN} />
      <Box x={1069} y={207} w={7} h={7} c={OLIVE} />

      <Caps x={991} list={[[211, "C598", true], [221, "C602"], [229, "C601"], [238, "C597", true], [247, "C595"]]} />
      <Caps x={1069} list={[[221, "C610"], [229, "C612"], [238, "C613"], [247, "C614"], [256, "C608"], [265, "C615"]]} />
      <Strip x={1070} from={272} to={320} />
      <BigPart x={1069} y={326} />
      <Strip x={1070} from={352} to={353} />
      <Caps x={1069} list={[[361, "C609"], [371, "C611"], [380, "C620"], [389, "C587"], [397, "C618"], [405, "C588", true]]} />
      <BigPart x={1069} y={412} />
      <BigPart x={1069} y={438} />
      <path d="M1092 356h18M1092 443h18M1092 469h18" stroke={PINK} strokeWidth="2" strokeDasharray="2 3" />
      <Strip x={1070} from={465} to={568} />
      <Caps x={1069} list={[[574, "C619", true]]} />

      <path d="M407 802.500h53" stroke={CYAN} strokeWidth="2" strokeDasharray="2 1" />
      {[794, 818, 843, 867, 892].map((y) => (
        <GateIc key={y} y={y} />
      ))}
      <path d="M407.500 901.500h40v41h-40v-18h6v-6h-6z" stroke={CYAN} />
      <path d="M409 907.500h38M409 936.500h38" stroke={GREEN} strokeWidth="10" strokeDasharray="3 1" />
      <path d="M409 936.500h14" stroke={OLIVE} strokeWidth="10" strokeDasharray="3 1" />

      <Caps
        x={552}
        list={[[803, "C516"], [811, "C518", true], [820, "C524"], [829, "C537"], [838, "C530", true], [847, "C528"], [856, "C538"], [865, "C540"], [874, "C529", true], [883, "C558", true], [892, "C550"], [901, "C567"], [910, "C571"], [918, "C565"], [937, "C64"]]}
      />
      <Caps
        x={586}
        list={[[801, "C515"], [810, "C525"], [819, "C526", true], [828, "C514"], [837, "C533"], [846, "C516"], [855, "C544"], [864, "C527"], [873, "C548"], [882, "C519"], [891, "C590"], [900, "C561"], [909, "C582"], [918, "C563"], [927, "C514"], [936, "C570"]]}
      />
      <Strip x={602} from={804} to={890} />
      <Strip x={602} from={912} to={944} />
      <Strip x={635} from={804} to={806} />
      <Strip x={635} from={820} to={830} />
      <Strip x={647} from={820} to={830} />
      <Strip x={635} from={843} to={844} />
      <Strip x={635} from={857} to={876} />
      <Strip x={635} from={888} to={944} />
      <Strip x={647} from={904} to={944} />
      <Strip x={692} from={803} to={944} />
      <Strip x={789} from={828} to={860} />
      <Label x={778} y={807} t="C594" s={11} />
      <Caps x={809} list={[[810, "C584", true]]} />
      <Caps x={789} list={[[867, "C577"], [875, "C576"], [884, "C590", true]]} />
      <Caps
        x={897}
        list={[[803, "C454"], [811, "C452", true], [820, "C451"], [829, "C435"], [846, "C453", true], [856, "C455"], [865, "C456"], [874, "C457"], [883, "C396"], [891, "C400"], [900, "C447", true], [933, "C448"]]}
      />
      <Strip x={899} from={912} to={926} />
    </g>
  </Board>
);

/* ---------- dialog content ---------- */

type Node = { name: string; kind: "leaf" | "plus" | "minus" | "child" | "last" };
const tree: Node[] = [
  { name: "My_favorites", kind: "leaf" },
  { name: "Display", kind: "plus" },
  { name: "Drawing", kind: "plus" },
  { name: "Drc", kind: "plus" },
  { name: "File_management", kind: "plus" },
  { name: "Ic_packaging", kind: "plus" },
  { name: "Interactive", kind: "leaf" },
  { name: "Interfaces", kind: "plus" },
  { name: "Logic", kind: "leaf" },
  { name: "Manufacture", kind: "plus" },
  { name: "Obsolete", kind: "leaf" },
  { name: "Os", kind: "leaf" },
  { name: "Paths", kind: "minus" },
  { name: "Config", kind: "child" },
  { name: "Editor", kind: "child" },
  { name: "Library", kind: "child" },
  { name: "MCM", kind: "child" },
  { name: "Signoise", kind: "last" },
  { name: "Placement", kind: "plus" },
  { name: "Route", kind: "plus" },
  { name: "Shapes", kind: "plus" },
  { name: "Signal_analysis", kind: "leaf" },
];

const Guides = ({ kind, first }: { kind: Node["kind"]; first: boolean }) => {
  const nested = kind === "child" || kind === "last";
  const w = nested ? 41 : 22;
  const line = nested ? 30.5 : 11.5;
  return (
    <svg width={w} height="16" fill="none" shapeRendering="crispEdges" aria-hidden="true">
      <path d={`M11.5 ${first ? 8 : 0}V16M${line} 8.5H${w}`} stroke="#808080" strokeDasharray="1 1" />
      {nested && <path d={`M30.5 0V${kind === "last" ? 9 : 16}`} stroke="#808080" strokeDasharray="1 1" />}
      {(kind === "plus" || kind === "minus") && (
        <>
          <rect x="7.500" y="4.500" width="8" height="8" fill="#fff" stroke="#808080" />
          <path d={kind === "plus" ? "M9 8.500h5M11.500 6v5" : "M9 8.500h5"} stroke="#000" />
        </>
      )}
    </svg>
  );
};

const Folder = () => (
  <svg width="15" height="13" fill="none" shapeRendering="crispEdges" aria-hidden="true">
    <path d="M.5 11.500V3.500l1-1 1-1h4l1 2h6v8z" fill="#ffff66" stroke="#808000" />
    <path d="M1 12.500h14M14.500 4v9M2 1h5" stroke="#000" />
  </svg>
);

const Arrow = ({ d }: { d: "up" | "down" }) => (
  <svg width="7" height="4" shapeRendering="crispEdges" aria-hidden="true">
    <path d={d === "up" ? "M0 4h7L3.500 0z" : "M0 0h7L3.500 4z"} fill="#000" />
  </svg>
);

const prefs: [string, boolean][] = [
  ["devpath", true],
  ["interfacepath", false],
  ["miscpath", false],
  ["modulepath", false],
  ["padpath", true],
  ["parampath", false],
  ["psmpath", true],
  ["techpath", false],
  ["topology_template_path", false],
];

const PreferencesDialog = () => (
  <Dialog role="dialog" aria-label="User Preferences Editor">
    <DialogTitle>
      <svg width="16" height="16" viewBox="0 0 16 16" aria-hidden="true">
        <rect x="1" y="1" width="10" height="11" fill="#fff" stroke="#224" />
        <path d="M2 4h5M2 7h8M4 2v4M7 2v9" stroke="#448" />
        <path d="M1 15l5-5 3 1 5-6 2-1-1 5-2 3 1 2-4-2-3 4-2-3z" fill="#e01020" />
      </svg>
      <DialogHeading>User Preferences Editor</DialogHeading>
      <WindowButton aria-label="Minimize">
        <svg width="10" height="10"><path d="M0 5.500h10" stroke="#fff" /></svg>
      </WindowButton>
      <WindowButton aria-label="Maximize" disabled>
        <svg width="10" height="10"><rect x=".5" y=".5" width="9" height="9" fill="none" stroke="#3d97e0" /></svg>
      </WindowButton>
      <WindowButton aria-label="Close">
        <svg width="10" height="10"><path d="M0 0l10 10M10 0L0 10" stroke="#fff" strokeWidth="1.300" /></svg>
      </WindowButton>
    </DialogTitle>
    <DialogBody>
      <Columns>
        <Group $w={174}>
          <Legend>Categories</Legend>
          <TreeBox>
            <TreeList>
              {tree.map((n, i) => (
                <TreeRow key={n.name}>
                  <Guides kind={n.kind} first={i === 0} />
                  <Folder />
                  <TreeName $on={n.name === "Library"}>{n.name}</TreeName>
                </TreeRow>
              ))}
            </TreeList>
            <ScrollTrack $w={17}>
              <ScrollButton aria-label="Scroll up"><Arrow d="up" /></ScrollButton>
              <ScrollThumb $h={263} />
              <Spacer />
              <ScrollButton aria-label="Scroll down"><Arrow d="down" /></ScrollButton>
            </ScrollTrack>
          </TreeBox>
          <SearchLabel htmlFor="pref-search">Search for preference:</SearchLabel>
          <SearchLine>
            <SearchBox id="pref-search" type="text" />
            <PushButton $w={51}>Search</PushButton>
          </SearchLine>
          <CheckLine>
            <Check type="checkbox" />
            Include summary in search
          </CheckLine>
        </Group>
        <PrefGroup>
          <Legend>{"Category:   Library"}</Legend>
          <PrefTable>
            <colgroup>
              <col style={{ width: 182 }} />
              <col style={{ width: 147 }} />
              <col style={{ width: 63 }} />
              <col />
            </colgroup>
            <thead>
              <tr>
                <th scope="col">Preference</th>
                <th scope="col">Value</th>
                <th scope="col">Effective</th>
                <th scope="col">Favorite</th>
              </tr>
            </thead>
            <tbody>
              {prefs.map(([name, fav]) => (
                <tr key={name}>
                  <th scope="row">{name}</th>
                  <td><PushButton $w={35} aria-label={`${name} value`}>...</PushButton></td>
                  <td>Command</td>
                  <td><Check type="checkbox" defaultChecked={fav} aria-label={`${name} favorite`} /></td>
                </tr>
              ))}
            </tbody>
          </PrefTable>
        </PrefGroup>
      </Columns>
      <Summary>
        <Legend>Summary description</Legend>
        <SummaryText>Library Search Path Settings (CPM enabled)</SummaryText>
      </Summary>
      <Actions>
        <PushButton $w={70} $default>OK</PushButton>
        <PushButton $w={70}>Cancel</PushButton>
        <PushButton $w={70}>Apply</PushButton>
        <PushGap />
        <PushButton $w={70}>List All</PushButton>
        <PushButton $w={70}>Info...</PushButton>
        <PushButton $w={70}>Help</PushButton>
      </Actions>
    </DialogBody>
    <DialogStatus>
      <DialogStatusCell $w={34} />
      <DialogStatusCell />
    </DialogStatus>
  </Dialog>
);

/* ---------- small parts of the page ---------- */

const menus: [string, string, string, number][] = [
  ["", "F", "ile", 33],
  ["", "E", "dit", 36],
  ["", "V", "iew", 41],
  ["", "A", "dd", 38],
  ["", "D", "isplay", 56],
  ["Set", "u", "p", 47],
  ["", "S", "hape", 50],
  ["", "L", "ogic", 45],
  ["", "P", "lace", 44],
  ["FlowPla", "n", "", 64],
  ["", "R", "oute", 48],
  ["Analy", "z", "e", 58],
  ["", "M", "anufacture", 87],
  ["", "T", "ools", 46],
  ["", "H", "elp", 46],
];

const DockHead = ({ name }: { name: string }) => (
  <DockBar>
    <svg width="8" height="44" fill="none" shapeRendering="crispEdges" aria-hidden="true">
      <path d="M1 1l6 6M7 1L1 7" stroke="#000" strokeWidth="2" />
      <path d="M6 14v7l-4-3.500z" fill="#000" />
      <path d="M0 34.500h3M3.500 31v7M3 32.500h5M3 36.500h5" stroke="#000" />
    </svg>
    <DockName>{name}</DockName>
    <DockGrip />
  </DockBar>
);

const imeKeys: [string, ReactNode][] = [
  ["Chinese mode", <><rect x="3" y="6" width="12" height="6" stroke="currentColor" strokeWidth="2" /><path d="M9 2v14" stroke="currentColor" strokeWidth="2" /></>],
  ["Half width", <path d="M13 2c3 3 3 8 0 11s-8 3-11 0c7 1 11-4 11-11z" fill="currentColor" stroke="currentColor" />],
  ["Punctuation", <><circle cx="5" cy="6" r="2" stroke="currentColor" strokeWidth="1.500" /><path d="M13 9v2c0 3-1 4-3 4" stroke="currentColor" strokeWidth="3" /></>],
  ["Voice", <><rect x="6" y="1" width="6" height="10" rx="3" fill="currentColor" /><path d="M3 8c0 7 12 7 12 0M9 13v4M5 17h8" stroke="currentColor" strokeWidth="1.500" /></>],
  ["Keyboard", <><rect x="1" y="3" width="16" height="12" rx="1" fill="currentColor" /><path d="M3 6h12M3 9h12M5 12h8" stroke="#fff" strokeDasharray="2 1" strokeWidth="1.500" /></>],
  ["Account", <><circle cx="7" cy="5" r="3" fill="#b9c6da" /><path d="M1 15c0-7 10-7 12 0z" fill="#b9c6da" /><text x="7" y="16" fontFamily="Liberation Sans" fontWeight="700" fontSize="9" fill="#8fa3c0">12</text></>],
  ["Skins", <path d="M6 2c1 2 5 2 6 0l5 3-2 4-2-1v9H5V8L3 9 1 5z" fill="currentColor" />],
  ["Tools", <path d="M2 15l7-7c-1-4 2-7 6-6l-3 3 2 2 3-3c1 4-2 7-6 6l-7 7z" fill="currentColor" />],
];

export default function App() {
  return (
    <Page>
      <GlobalStyle />
      <Defs aria-hidden="true">
        <defs>
          <linearGradient id="gBlue" x1="0" y1="0" x2="0" y2="1">
            <stop offset="0" stopColor="#ccd7ef" />
            <stop offset="1" stopColor="#7890cc" />
          </linearGradient>
          <linearGradient id="gGold" x1="0" y1="0" x2="0" y2="1">
            <stop offset="0" stopColor="#fdebbd" />
            <stop offset="1" stopColor="#edb95a" />
          </linearGradient>
        </defs>
      </Defs>

      <TitleBar>
        <svg width="16" height="18" viewBox="0 0 16 18" aria-hidden="true">
          <path d="M1 2h5v4H3v4H1zM9 3l5-2v5l-4 1zM2 12l4 2v3H2zM11 12h4v4h-3z" fill="#20c030" stroke="#084010" />
          <path d="M1 13l5-7 3 2 6-4-4 6 2 4-4-1-4 4v-4z" fill="#e01818" stroke="#400" strokeWidth=".6" />
        </svg>
        <WindowTitle>{"Allegro PCB Design GXL (legacy): ACP-3021_A1.brd  Project: E:/project/ACP-3021/BRD"}</WindowTitle>
        <WindowButton aria-label="Minimize window">
          <svg width="10" height="10"><path d="M0 5.500h10" stroke="#888" /></svg>
        </WindowButton>
        <WindowButton aria-label="Restore window">
          <svg width="10" height="10" fill="none" stroke="#888"><path d="M.5 2.500h7v7h-7zM2.500 2V.5h7v7H8" /></svg>
        </WindowButton>
        <WindowButton aria-label="Close window">
          <svg width="10" height="10"><path d="M0 0l10 10M10 0L0 10" stroke="#888" /></svg>
        </WindowButton>
      </TitleBar>

      <MenuBar>
        {menus.map(([a, u, b, w]) => (
          <MenuItem key={a + u + b} $w={w}>
            {a}
            <u>{u}</u>
            {b}
          </MenuItem>
        ))}
        <Brand>
          c<BrandBar>a</BrandBar>dence
        </Brand>
      </MenuBar>

      {toolRows.map((groups, r) => (
        <ToolRow key={r}>
          {groups.map((g, i) => (
            <ToolGroup key={i}>
              <Grip />
              {g.map(([name, w], k) => (
                <Tool key={k} name={name} w={w} s={22} />
              ))}
            </ToolGroup>
          ))}
        </ToolRow>
      ))}

      <Body>
        <SideBars>
          {sideGroups.map((g, i) => (
            <SideGroup key={i} $w={g.w} $gap={g.gap} $pad={g.pad}>
              <SideGrip $w={g.w - 10} />
              {g.names.map((n) =>
                n === "Flow plan" ? (
                  <ActiveTool key={n}>
                    <Tool name={n} w={29} s={22} />
                    <Tool name="Flow plan options" w={15} s={20} />
                  </ActiveTool>
                ) : (
                  <Tool key={n} name={n} s={22} />
                )
              )}
            </SideGroup>
          ))}
        </SideBars>

        <Centre>
          <Workspace>
            <BoardDrawing />
            <PreferencesDialog />
            <ImeBar>
              <ImeLogo width="30" height="28" viewBox="0 0 30 28" aria-hidden="true">
                <path d="M2 4L24 1l4 21-3 4-20 2z" fill="#f4511e" stroke="#fff" strokeWidth=".5" />
                <path d="M22 7C14 5 8 8 9 11s12 2 12 6-8 6-14 3" fill="none" stroke="#fff" strokeWidth="4" />
              </ImeLogo>
              {imeKeys.map(([name, art]) => (
                <ImeKey key={name} aria-label={name}>
                  <svg width="18" height="18" fill="none">{art}</svg>
                </ImeKey>
              ))}
            </ImeBar>
          </Workspace>

          <Docks>
            <Dock>
              <DockHead name="Com" />
              <Log>
                {["C600", "U54", "R635", "C599"].map((s) => (
                  <LogLine key={s}>{`Symbol "${s}" dehighlighted.`}</LogLine>
                ))}
                <LogLine>{"Command >"}</LogLine>
              </Log>
              <LogScroll $w={17}>
                <ScrollButton aria-label="Scroll log up"><Arrow d="up" /></ScrollButton>
                <Spacer />
                <ScrollThumb $h={8} />
                <ScrollButton aria-label="Scroll log down"><Arrow d="down" /></ScrollButton>
              </LogScroll>
            </Dock>
            <Dock $w={366}>
              <DockHead name="Wor" />
              <WorldView fill="none" shapeRendering="crispEdges" aria-label="World view">
                <path d="M3.500 2.500h38v61h-38zM8 9h30v3H12z" stroke="#ffff00" />
                <path d="M26.500 0V61.500H163.500V0" stroke="#ffff99" />
                <path d="M10 3l74 19M14 5l58 14M4 8l66 9" stroke={OLIVE} strokeWidth="1" strokeDasharray="7 1" />
                <path d="M85.500 22v21M54 38h6M70 35h4M66 8l3-5M70 11h3v2h-3zM70 41h3v3h-3zM70 50h3M15 23h3M20 15h2" stroke={OLIVE} />
                {[[7, 29], [36, 29], [7, 55], [22, 55], [36, 55], [6, 4], [38, 4], [34, 5]].map(([x, y], i) => (
                  <circle key={i} cx={x} cy={y} r="2" stroke={OLIVE} />
                ))}
              </WorldView>
            </Dock>
          </Docks>
        </Centre>

        <TabRail>
          <RailTab>Visibility</RailTab>
          <RailTab>Find</RailTab>
          <RailTab>Options</RailTab>
        </TabRail>
      </Body>

      <StatusBar>
        <StatusCell>Idle</StatusCell>
        <StatusCell $w={51} $bg="#00ff00" />
        <StatusCell $w={131} />
        <StatusCell $w={121}>Top</StatusCell>
        <StatusCell $w={132}>104.2162, 92.2274</StatusCell>
        <StatusButton>P</StatusButton>
        <StatusButton>A</StatusButton>
        <StatusCell $w={101} />
        <StatusCell $w={41} />
        <StatusCell $w={121}>General edit</StatusCell>
        <StatusCell $w={71}>Off</StatusCell>
        <StatusCell $w={51} $bg="#ff0000">DRC</StatusCell>
        <StatusCell $w={42}>0</StatusCell>
      </StatusBar>
      <TaskStrip />

      <CountBadge>48</CountBadge>
      <Watermark>
        <svg width="36" height="46" viewBox="0 0 38 46" aria-hidden="true">
          <path d="M24 1c-1 6-24 12-23 27a17 17 0 0 0 34 1c0-8-7-9-7-15 0-4-2-5-4-13z" fill="#fff" fillOpacity=".85" />
          <path d="M7 27h7l10-9M10 36l8-7 11-1" stroke="#555" strokeWidth="1.500" fill="none" />
        </svg>
        <WatermarkText>
          电子发烧友
          <WatermarkUrl>www.elecfans.com</WatermarkUrl>
        </WatermarkText>
      </Watermark>
    </Page>
  );
}
